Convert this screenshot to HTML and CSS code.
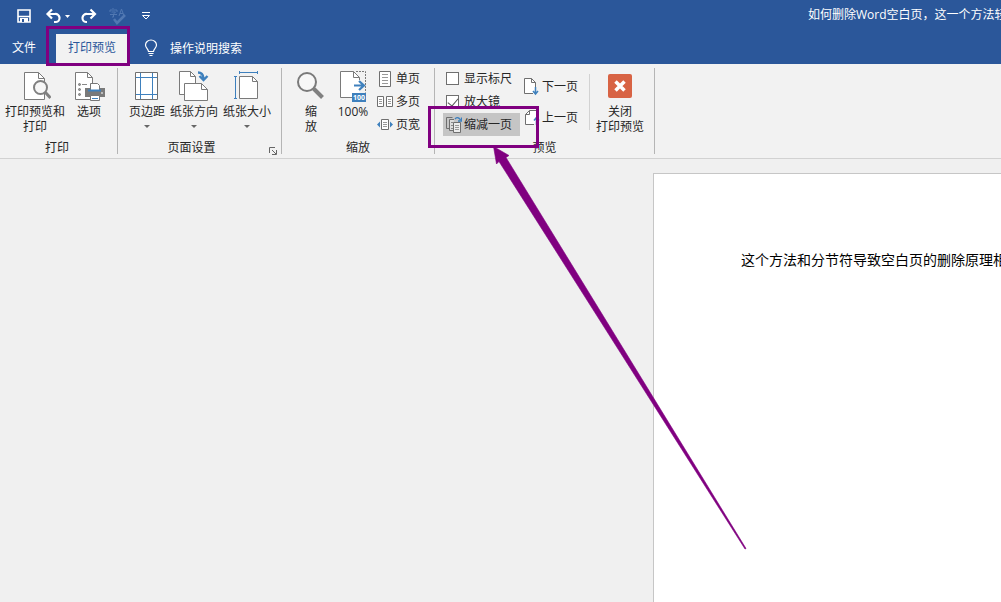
FILE: index.html
```html
<!DOCTYPE html>
<html lang="zh-CN">
<head>
<meta charset="utf-8">
<title>打印预览</title>
<link rel="stylesheet" href="styles.css">
</head>
<body>
<header class="titlebar">
  <nav class="quick">
    <button class="qbtn" aria-label="保存"><svg width="16" height="16" viewBox="0 0 16 16"><path d="M2 2h12v12H2zM2 8.500h12" fill="none" stroke="#fff" stroke-width="1.600"/><path d="M4 10h8v4H4z" fill="#fff"/><path d="M6 11h2v3H6z" fill="#2b579a"/></svg></button>
    <button class="qbtn undo" aria-label="撤消"><svg width="26" height="16" viewBox="0 0 26 16"><path d="M3 6h7a4 4 0 0 1 1 8H9M7 1.500L2.500 6 7 10.500" fill="none" stroke="#fff" stroke-width="2.200"/><path d="M20 7h5l-2.500 3z" fill="#fff"/></svg></button>
    <button class="qbtn" aria-label="恢复"><svg width="16" height="16" viewBox="0 0 16 16"><path d="M13 6H6a4 4 0 0 0-1 8h1M9.500 1.500L14 6l-4.500 4.500" fill="none" stroke="#fff" stroke-width="2.200"/></svg></button>
    <button class="qbtn spell" aria-label="拼写检查"><svg width="18" height="18" viewBox="0 0 18 18"><path d="M4 1v1M1 5V3h7v2M2.500 5h4L4.500 7v3H3M1 7.500h7M10 9l2.500-7L15 9M11 6.500h3" fill="none" stroke="#5178b2"/><path d="M5 12l3 4 8-8" fill="none" stroke="#5178b2" stroke-width="2.500"/></svg></button>
    <button class="qbtn" aria-label="自定义快速访问工具栏"><svg width="10" height="10" viewBox="0 0 10 10"><path d="M1 1.500h8M1.500 4.500L5 8l3.500-3.500z" fill="none" stroke="#fff"/></svg></button>
  </nav>
  <h1 class="doc-title">如何删除Word空白页，这一个方法轻</h1>
</header>
<nav class="tabs">
  <button class="tab">文件</button>
  <button class="tab active">打印预览</button>
  <button class="tell-me"><svg width="14" height="18" viewBox="0 0 14 18"><path d="M4.500 12.500C4.500 10 1.500 9 1.500 6a5.500 5 0 0 1 11 0c0 3-3 4-3 6.500zM4.500 14.500h5M5.500 16.500h3" fill="none" stroke="#fff" stroke-width="1.200"/></svg>操作说明搜索</button>
</nav>
<section class="ribbon">
  <div class="group print">
    <div class="body">
      <button class="big wide">
        <svg width="32" height="34" viewBox="0 0 32 34"><path d="M5.500 2.500h14l6 6v21h-20z" fill="#fff" stroke="#7a7a7a"/><path d="M19.500 2.500v6h6" fill="none" stroke="#7a7a7a"/><circle cx="21.500" cy="17.500" r="6.500" fill="#f7f7f7" stroke="#808080" stroke-width="2"/><path d="M26 22l5.500 6" stroke="#808080" stroke-width="3"/></svg>
        <span>打印预览和<br>打印</span>
      </button>
      <button class="big opts">
        <svg width="32" height="34" viewBox="0 0 32 34"><path d="M2.500 2.500h12l5 5v22h-17z" fill="#fff" stroke="#7a7a7a"/><path d="M14.500 2.500v5h5" fill="none" stroke="#7a7a7a"/><g fill="#999" stroke="#777"><circle cx="6.500" cy="14.500" r="1"/><circle cx="6.500" cy="19.500" r="1"/><circle cx="6.500" cy="24.500" r="1"/></g><path d="M9 14.500h5" stroke="#888"/><path d="M12 18h20v9H12z" fill="#7a7a7a"/><path d="M17.500 13.500h7l2 2v5h-9z" fill="#fff" stroke="#777"/><path d="M15 20.500h13" stroke="#3e80bd" stroke-width="2"/><path d="M17.500 25.500h9v5h-9z" fill="#fff" stroke="#777"/><path d="M19 28.500h6" stroke="#3e80bd"/><path d="M28 23h2" stroke="#fff"/></svg>
        <span>选项</span>
      </button>
    </div>
    <div class="label">打印</div>
  </div>
  <i class="sep"></i>
  <div class="group setup">
    <div class="body">
      <button class="big opts">
        <svg width="32" height="34" viewBox="0 0 32 34"><path d="M4.500 2.500h22v27h-22z" fill="#fff" stroke="#6f6f6f"/><path d="M9.500 3v26M21.500 3v26M5 7.500h21M5 24.500h21" stroke="#3e80bd"/></svg>
        <span>页边距</span><i class="caret"></i>
      </button>
      <button class="big mid">
        <svg width="32" height="34" viewBox="0 0 32 34"><path d="M1.500 1.500h11l5 5v18h-16z" fill="#fff" stroke="#7a7a7a"/><path d="M12.500 1.500v5h5" fill="none" stroke="#7a7a7a"/><path d="M6.500 13.500h17l6 6v11h-23z" fill="#fff" stroke="#7a7a7a"/><path d="M23.500 13.500v6h6" fill="none" stroke="#7a7a7a"/><path d="M20 2.500q5 0 5.500 6M21.500 6l4 4 4-4" fill="none" stroke="#3e80bd" stroke-width="2.400"/></svg>
        <span>纸张方向</span><i class="caret"></i>
      </button>
      <button class="big mid2">
        <svg width="32" height="34" viewBox="0 0 32 34"><path d="M8.500 6.500h13l5 5v17h-18z" fill="#fff" stroke="#7a7a7a"/><path d="M21.500 6.500v5h5" fill="none" stroke="#7a7a7a"/><path d="M8.500 2.500h18M8.500 1v3M26.500 1v3M4.500 6.500v22M3 6.500h3M3 28.500h3" fill="none" stroke="#3e80bd"/></svg>
        <span>纸张大小</span><i class="caret"></i>
      </button>
    </div>
    <div class="label"><span>页面设置</span><button class="launcher" aria-label="页面设置对话框"><svg width="8" height="8" viewBox="0 0 8 8"><path d="M.5 6V.5H6M3 3l4 4M7.500 3v4.500H3" fill="none" stroke="#666"/></svg></button></div>
  </div>
  <i class="sep"></i>
  <div class="group zoom">
    <div class="body">
      <button class="big narrow">
        <svg width="32" height="34" viewBox="0 0 32 34"><circle cx="12" cy="12" r="9" fill="#f7f7f7" stroke="#7a7a7a" stroke-width="2"/><path d="M18.500 18.500l9 9" stroke="#808080" stroke-width="4"/></svg>
        <span>缩<br>放</span>
      </button>
      <button class="big opts">
        <svg width="32" height="34" viewBox="0 0 32 34"><path d="M3.500 1.500h13l6 6v20h-19z" fill="#fff"/><path d="M22.500 10V7.500l-6-6h-13v26H15" fill="none" stroke="#7a7a7a"/><path d="M16.500 1.500v6h6" fill="none" stroke="#7a7a7a"/><path d="M19 1.500h9.500v21" fill="none" stroke="#7a7a7a" stroke-dasharray="2 1"/><path d="M17 15.500h9M22 11l5 4.500-5 4.500" fill="none" stroke="#3e80bd" stroke-width="2.200"/><path d="M15 23h14v9H15z" fill="#3e80bd"/><text x="22" y="30" class="badge">100</text></svg>
        <span>100%</span>
      </button>
      <div class="stack">
        <button class="row"><svg width="16" height="18" viewBox="0 0 16 18"><path d="M2.500 1.500h11v15h-11z" fill="#fff" stroke="#6f6f6f"/><path d="M5 4.500h6M5 7.500h6M5 10.500h6M5 13.500h6" stroke="#999"/></svg>单页</button>
        <button class="row"><svg width="16" height="18" viewBox="0 0 16 18"><path d="M.5 3.500h6v10h-6zM9.500 3.500h6v10h-6z" fill="#fff" stroke="#6f6f6f"/><path d="M2 6.500h3M2 8.500h3M2 10.500h3M11 6.500h3M11 8.500h3M11 10.500h3" stroke="#999"/></svg>多页</button>
        <button class="row"><svg width="16" height="18" viewBox="0 0 16 18"><path d="M4.500 3.500h7v10h-7z" fill="#fff" stroke="#6f6f6f"/><path d="M6 6.500h4M6 8.500h4M6 10.500h4" stroke="#999"/><path d="M3 5.500v6L0 8.500zM13 5.500v6l3-3z" fill="#3e80bd"/></svg>页宽</button>
      </div>
    </div>
    <div class="label">缩放</div>
  </div>
  <i class="sep"></i>
  <div class="group preview">
    <div class="body">
      <div class="stack checks">
        <label class="row"><input type="checkbox">显示标尺</label>
        <label class="row"><input type="checkbox" checked>放大镜</label>
        <button class="row pressed"><svg width="16" height="18" viewBox="0 0 16 18"><path d="M6.500 1.500h-6v11H3" fill="none" stroke="#6f6f6f"/><path d="M8 3.500H3.500v11H7" fill="#ddd" stroke="#6f6f6f"/><path d="M5 6.500h2M5 9.500h2M5 12.500h2" stroke="#888"/><path d="M7.500 6.500h7v10h-7z" fill="#ececec" stroke="#6f6f6f"/><path d="M9 9.500h4M9 11.500h4M9 13.500h4" stroke="#999"/><path d="M9 3q3-3 5.500 1M15.500 1.500v3.500H12" fill="none" stroke="#3e80bd" stroke-width="1.300"/></svg>缩减一页</button>
      </div>
      <div class="stack pages">
        <button class="row"><svg width="16" height="18" viewBox="0 0 16 18"><path d="M9 15.500H.5v-15h7l4 4V9" fill="#fff" stroke="#6f6f6f"/><path d="M7.500.5v4h4" fill="none" stroke="#6f6f6f"/><path d="M11.500 9v7M9 13l2.500 3 2.500-3" fill="none" stroke="#3e80bd" stroke-width="1.500"/></svg>下一页</button>
        <button class="row"><svg width="16" height="18" viewBox="0 0 16 18"><path d="M12.500 9V1.500h-7l-4 4v10H10" fill="#fff" stroke="#6f6f6f"/><path d="M5.500 1.500v4h-4" fill="none" stroke="#6f6f6f"/><path d="M12.500 16V9M10 11.500l2.500-3 2.500 3" fill="none" stroke="#3e80bd" stroke-width="1.500"/></svg>上一页</button>
      </div>
      <i class="sep inner"></i>
      <button class="big close">
        <svg width="32" height="34" viewBox="0 0 32 34"><rect x="4" y="4" width="24" height="24" rx="2" fill="#d86344"/><path d="M11.500 11.500l9 9M20.500 11.500l-9 9" stroke="#fff" stroke-width="3.500"/></svg>
        <span>关闭<br>打印预览</span>
      </button>
    </div>
    <div class="label">预览</div>
  </div>
  <i class="sep"></i>
</section>
<main class="workspace">
  <article class="page"><p>这个方法和分节符导致空白页的删除原理相</p></article>
</main>
<svg class="marks" width="760" height="560" viewBox="0 0 760 560" aria-hidden="true">
  <path d="M47.500 27.500h81v37h-81zM429.500 107.500h108v39h-108z" fill="none" stroke="#800080" stroke-width="3"/>
  <path d="M493.500 146.500L509 155.500l-3 2L746 548.500l-1 .5L499 161.500l-2.500 2.500z" fill="#800080" stroke="#800080" stroke-width=".6"/>
</svg>
</body>
</html>
```
FILE: styles.css
```css
* { box-sizing: border-box; }
body {
  margin: 0;
  min-height: 100vh;
  display: flex;
  flex-direction: column;
  overflow: hidden;
  background: #f0f0f0;
  color: #262626;
  font: 12px/15px "Open Sans", "Noto Sans CJK SC", sans-serif;
}
button {
  margin: 0;
  padding: 0;
  border: 0;
  background: none;
  color: inherit;
  font: inherit;
}
svg { display: block; flex: none; }

.titlebar {
  display: flex;
  height: 32px;
  background: #2b579a;
  color: #fff;
}
.quick {
  display: flex;
  align-items: center;
  gap: 10px;
  padding-left: 16px;
}
.qbtn.undo { margin-left: 3px; }
.qbtn.spell { margin: 0 4px 0 2px; }
.doc-title {
  width: 193px;
  margin: 0 0 0 auto;
  overflow: hidden;
  white-space: nowrap;
  font-size: 12px;
  font-weight: 400;
  line-height: 30px;
}

.tabs {
  display: flex;
  align-items: flex-end;
  height: 32px;
  background: #2b579a;
  color: #fff;
}
.tab { height: 30px; padding: 0 12px 4px; }
.tab.active {
  margin-left: 8px;
  background: #f2f2f2;
  color: #2b579a;
}
.tell-me {
  display: flex;
  align-items: center;
  gap: 12px;
  height: 30px;
  padding: 0 0 2px 16px;
}

.ribbon {
  display: flex;
  height: 95px;
  border-bottom: 1px solid #d2d2d2;
  background: #f2f2f2;
}
.group {
  display: flex;
  flex-direction: column;
  padding-top: 3px;
}
.body { display: flex; height: 73px; }
.label {
  display: flex;
  justify-content: center;
  line-height: 16px;
}
.sep {
  width: 1px;
  height: 86px;
  margin-top: 4px;
  background: #b5b5b5;
}
.sep.inner {
  height: 56px;
  margin: 7px 0 0 11px;
  background: #d2d2d2;
}

.big {
  display: flex;
  flex-direction: column;
  align-items: center;
  padding-top: 3px;
  white-space: nowrap;
}
.wide { width: 64px; }
.opts { width: 44px; }
.mid { width: 50px; }
.mid2 { width: 56px; }
.narrow { width: 36px; }
.close { width: 60px; }
.caret {
  margin-top: 6px;
  border: 3px solid transparent;
  border-top-color: #666;
  border-bottom: 0;
}
.badge {
  fill: #fff;
  font: bold 7px "Noto Sans", sans-serif;
  text-anchor: middle;
}

.print { margin-right: 6px; padding-left: 3px; }
.setup .body { padding: 0 6px 0 7px; }
.setup .label span { flex: 1; text-align: center; }
.launcher { width: 16px; padding: 6px 0 0 4px; }
.zoom .body { padding: 0 14px 0 11px; }
.zoom .opts { margin: 0 2px; }

.stack { display: flex; flex-direction: column; }
.row {
  display: flex;
  align-items: center;
  gap: 3px;
  height: 23px;
  white-space: nowrap;
}
.preview .body { padding: 0 4px 0 8px; }
.checks { width: 77px; }
.checks .row { gap: 5px; padding-left: 3px; }
.checks .row input {
  display: flex;
  justify-content: center;
  flex: none;
  appearance: none;
  width: 13px;
  height: 13px;
  margin: 0;
  border: 1px solid #6f6f6f;
  background: #fff;
}
.checks .row input:checked::before {
  content: "";
  width: 5px;
  height: 9px;
  border: solid #555;
  border-width: 0 1px 1px 0;
  rotate: 40deg;
}
.checks .pressed { gap: 2px; background: #c5c5c5; }
.pages { padding: 4px 0 0 4px; }
.pages .row { gap: 2px; height: 31px; }

.workspace { flex: 1; display: flex; padding-top: 14px; }
.page {
  width: 348px;
  margin-left: auto;
  padding: 76px 0 0 87px;
  overflow: hidden;
  border: solid #c6c6c6;
  border-width: 1px 0 0 1px;
  background: #fff;
  color: #000;
}
.page p {
  margin: 0;
  white-space: nowrap;
  font-size: 14px;
  line-height: 20px;
}
.marks {
  position: absolute;
  top: 0;
  left: 0;
  pointer-events: none;
}
```
